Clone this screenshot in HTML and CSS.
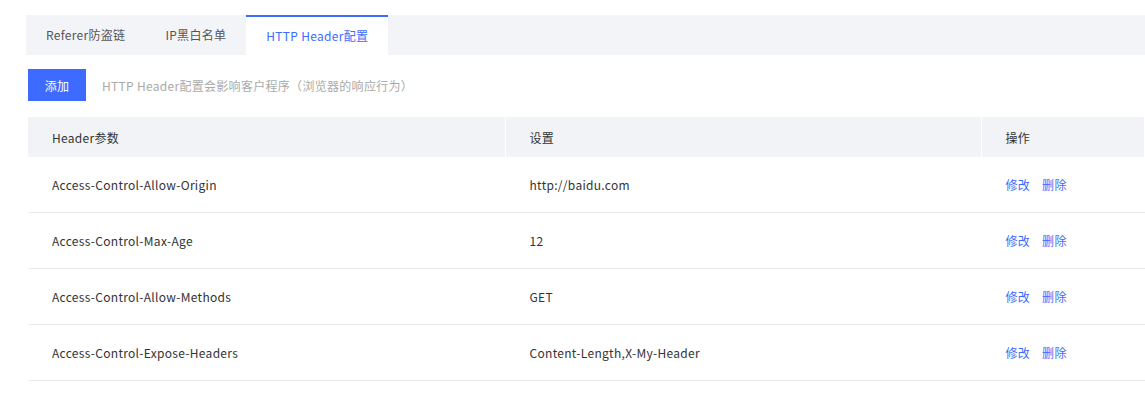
FILE: index.html
```html
<!DOCTYPE html>
<html lang="zh-CN">
<head>
<meta charset="utf-8">
<title>HTTP Header配置</title>
<link rel="stylesheet" href="styles.css">
</head>
<body>
<div class="page">
  <div class="tabs">
    <div class="tab">Referer防盗链</div>
    <div class="tab">IP黑白名单</div>
    <div class="tab active">HTTP Header配置</div>
  </div>
  <div class="content">
    <div class="toolbar">
      <button class="btn-primary">添加</button>
      <span class="hint">HTTP Header配置会影响客户程序（浏览器的响应行为）</span>
    </div>
    <table class="grid">
      <colgroup>
        <col class="c1"><col class="c2"><col class="c3">
      </colgroup>
      <thead>
        <tr><th>Header参数</th><th>设置</th><th>操作</th></tr>
      </thead>
      <tbody>
        <tr><td>Access-Control-Allow-Origin</td><td>http://baidu.com</td><td><a class="op">修改</a><a class="op">删除</a></td></tr>
        <tr><td>Access-Control-Max-Age</td><td>12</td><td><a class="op">修改</a><a class="op">删除</a></td></tr>
        <tr><td>Access-Control-Allow-Methods</td><td>GET</td><td><a class="op">修改</a><a class="op">删除</a></td></tr>
        <tr><td>Access-Control-Expose-Headers</td><td>Content-Length,X-My-Header</td><td><a class="op">修改</a><a class="op">删除</a></td></tr>
      </tbody>
    </table>
  </div>
</div>
</body>
</html>
```
FILE: styles.css
```css
html, body {
  margin: 0;
  padding: 0;
  background: #fff;
}
body {
  font-family: "Noto Sans CJK SC", "Noto Sans", sans-serif;
  font-size: 12px;
  letter-spacing: 0.3px;
  color: #333;
  width: 1145px;
  overflow: hidden;
}
.page {
  padding: 15px 0 0 26px;
}
.tabs {
  display: flex;
  height: 40px;
  background: #f3f4f7;
}
.tab {
  padding: 0 20px;
  line-height: 40px;
  color: #555;
  white-space: nowrap;
}
.tab.active {
  background: #fff;
  color: #3d6bff;
  border-top: 2px solid #3d6bff;
  line-height: 38px;
}
.content {
  padding-left: 2px;
}
.toolbar {
  display: flex;
  align-items: center;
  gap: 16px;
  margin-top: 14px;
  height: 32px;
}
.btn-primary {
  width: 58px;
  height: 32px;
  border: none;
  background: #3d6bff;
  color: #fff;
  font: inherit;
  letter-spacing: inherit;
  padding: 0;
}
.hint {
  color: #aaa;
}
.grid {
  margin-top: 16px;
  width: 1117px;
  border-collapse: collapse;
  table-layout: fixed;
}
.c1 { width: 477px; }
.c2 { width: 476px; }
.grid th, .grid td {
  text-align: left;
  padding: 0 0 0 24px;
  border-right: 1px solid #fff;
  white-space: nowrap;
}
.grid th {
  height: 40px;
  background: #f2f3f6;
  font-weight: normal;
  color: #333;
}
.grid td {
  height: 55px;
  border-bottom: 1px solid #e9eaec;
}
.op {
  color: #3d6bff;
  margin-right: 12px;
  cursor: pointer;
}
```
